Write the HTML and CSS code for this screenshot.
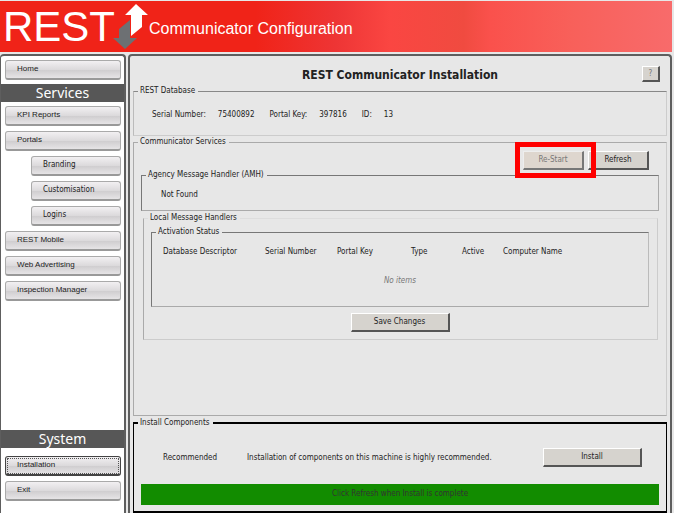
FILE: index.html
```html
<!DOCTYPE html>
<html lang="en">
<head>
    <meta charset="UTF-8">
    <meta name="viewport" content="width=device-width, initial-scale=1.0">
    <title>REST Communicator Configuration</title>
    <link rel="stylesheet" href="styles.css">
</head>
<body>
    <header class="banner">
        <span class="brand">REST</span>
        <svg class="arrows" viewBox="0 0 36 48" aria-hidden="true">
            <path d="M17 17V35H24L12 46L0 35H6V26Z" fill="#6d7073"/>
            <path d="M23 1L35 12H29V24L18 33V12H12Z" fill="#fff"/>
        </svg>
        <span class="product">Communicator Configuration</span>
    </header>

    <div class="layout">
        <nav class="sidebar">
            <button class="nav-button home">Home</button>
            <h2>Services</h2>
            <div class="nav-group">
                <button class="nav-button">KPI Reports</button>
                <button class="nav-button">Portals</button>
                <button class="nav-button sub">Branding</button>
                <button class="nav-button sub">Customisation</button>
                <button class="nav-button sub">Logins</button>
                <button class="nav-button">REST Mobile</button>
                <button class="nav-button">Web Advertising</button>
                <button class="nav-button">Inspection Manager</button>
            </div>
            <h2 class="system">System</h2>
            <div class="nav-group system-group">
                <button class="nav-button active">Installation</button>
                <button class="nav-button">Exit</button>
            </div>
        </nav>

        <main class="content">
            <div class="title-row">
                <h1>REST Communicator Installation</h1>
                <button class="button help">?</button>
            </div>

            <fieldset class="database">
                <legend>REST Database</legend>
                <dl>
                    <dt>Serial Number:</dt>
                    <dd>75400892</dd>
                    <dt>Portal Key:</dt>
                    <dd>397816</dd>
                    <dt>ID:</dt>
                    <dd>13</dd>
                </dl>
            </fieldset>

            <fieldset class="services">
                <legend>Communicator Services</legend>
                <div class="section-body">
                    <div class="service-actions">
                        <div class="highlight">
                            <button class="button restart" disabled>Re-Start</button>
                        </div>
                        <button class="button">Refresh</button>
                    </div>

                    <fieldset class="agency">
                        <legend>Agency Message Handler (AMH)</legend>
                        <p>Not Found</p>
                    </fieldset>

                    <fieldset class="local">
                        <legend>Local Message Handlers</legend>
                        <div class="local-body">
                            <fieldset class="activation">
                                <legend>Activation Status</legend>
                                <table>
                                    <thead>
                                        <tr>
                                            <th class="col-database">Database Descriptor</th>
                                            <th class="col-serial">Serial Number</th>
                                            <th class="col-portal">Portal Key</th>
                                            <th class="col-type">Type</th>
                                            <th class="col-active">Active</th>
                                            <th>Computer Name</th>
                                        </tr>
                                    </thead>
                                    <tbody>
                                        <tr>
                                            <td colspan="6">No items</td>
                                        </tr>
                                    </tbody>
                                </table>
                            </fieldset>
                            <button class="button wide save">Save Changes</button>
                        </div>
                    </fieldset>
                </div>
            </fieldset>

            <fieldset class="install">
                <legend>Install Components</legend>
                <div class="install-body">
                    <div class="install-row">
                        <span class="level">Recommended</span>
                        <span>Installation of components on this machine is highly recommended.</span>
                        <button class="button wide">Install</button>
                    </div>
                    <p class="notice">Click Refresh when Install is complete</p>
                </div>
            </fieldset>
        </main>
    </div>
</body>
</html>
```

FILE: styles.css
```css
* {
    box-sizing: border-box;
}
body {
    display: flex;
    flex-direction: column;
    min-height: 100vh;
    margin: 0;
    border-top: 1px solid #e7e7e7;
    border-bottom: 6px solid #fff;
    background: #e7e7e7;
    color: #222;
    font-family: "DejaVu Sans Condensed", "DejaVu Sans", sans-serif;
    font-size: 8px;
    line-height: 10px;
}
h1, h2, p, dl, dd {
    margin: 0;
}
button {
    font: inherit;
    color: inherit;
}

/* Banner */
.banner {
    display: flex;
    height: 51px;
    margin-right: 2px;
    padding-left: 3px;
    background: linear-gradient(90deg, #f02318 0%, #f02318 38%, #ee3535 50%, #fa4642 58%, #f04b40 69%, #fa514c 73%, #f8605a 85%, #f86b6b 100%);
    color: #fff;
    font-family: "Liberation Sans", Arial, sans-serif;
}
.brand {
    width: 110px;
    font-size: 42px;
    line-height: 51px;
}
.arrows {
    width: 36px;
    height: 48px;
    margin-top: 2px;
}
.product {
    padding-top: 18px;
    font-size: 16px;
    line-height: 20px;
}

/* Page layout */
.layout {
    display: flex;
    flex: 1;
    gap: 2px;
    padding: 2px 2px 0 0;
}
.sidebar {
    display: flex;
    flex-direction: column;
    width: 126px;
    border: 2px solid #5e5e5e;
    border-width: 2px 2px 0 1px;
    border-radius: 4px 4px 0 0;
    background: #fff;
}
.sidebar h2 {
    height: 18px;
    background: #575757;
    color: #fff;
    font-family: "Noto Sans", sans-serif;
    font-size: 14px;
    font-weight: normal;
    line-height: 18px;
    text-align: center;
}
.sidebar .system {
    margin-top: auto;
}
.nav-group {
    display: flex;
    flex-direction: column;
    gap: 5px;
    padding: 4px 0;
}
.system-group {
    padding: 8px 0 12px;
}
.nav-button {
    height: 20px;
    margin: 0 3px 0 4px;
    padding: 0 0 2px 11px;
    border: 1px solid #aaa;
    border-bottom: 2px solid #999;
    border-radius: 3px;
    background: linear-gradient(#f2f0f2, #dcdadc 50%, #d0ced0 55%, #e6e4e6);
    font-family: "Liberation Sans", Arial, sans-serif;
    text-align: left;
}
.nav-button.home {
    margin-top: 4px;
    margin-bottom: 4px;
}
.nav-button.sub {
    margin-left: 30px;
    font-family: "DejaVu Sans Condensed", "DejaVu Sans", sans-serif;
}
.nav-button.active {
    border-color: #444;
    outline: 1px dotted #555;
    outline-offset: -3px;
}

/* Main panel */
.content {
    display: flex;
    flex: 1;
    flex-direction: column;
    padding: 0 3px;
    border: 2px solid #5e5e5e;
    border-bottom: 0;
    border-radius: 4px 4px 0 0;
}
.title-row {
    position: relative;
    height: 30px;
    padding-top: 11px;
}
.title-row h1 {
    font-size: 12px;
    line-height: 16px;
    text-align: center;
}
.button {
    width: 61px;
    height: 19px;
    padding: 0;
    border: 1px solid;
    border-width: 1px 2px 2px 1px;
    border-color: #fff #555 #555 #fff;
    background: #d6d3ce;
}
.button.wide {
    width: 99px;
}
.button.help {
    position: absolute;
    top: 10px;
    right: 7px;
    width: 18px;
    height: 16px;
    color: #777;
}

/* Grouped sections */
fieldset {
    min-width: 0;
    margin: 0;
    padding: 0;
    border: 1px solid #aaa;
}
legend {
    height: 10px;
    margin-left: 4px;
    padding: 0 3px 0 2px;
}
.database {
    height: 50px;
    border-color: #888 #ccc #ccc #bbb;
}
.database dl {
    display: flex;
    padding: 14px 0 0 18px;
}
.database dt {
    margin-right: 12px;
}
.database dd {
    margin-right: 15px;
}
.services {
    flex: 1;
    margin: 1px 0 2px;
    border-color: #aaa #ccc #aaa #aaa;
}
.section-body {
    padding: 4px 7px 0;
}
.service-actions {
    display: flex;
    justify-content: flex-end;
    gap: 4px;
    margin-right: 10px;
}
.highlight {
    position: relative;
}
.highlight::after {
    content: "";
    position: absolute;
    inset: -9px -12px -8px -8px;
    z-index: 1;
    border: 5px solid #f00;
}
.button.restart {
    display: block;
    border-color: #eee #777 #777 #eee;
    background: #ded6ce;
    color: #777;
}
.agency {
    border-color: #777 #aaa #aaa #777;
}
.agency p {
    padding: 10px 0 10px 19px;
}
.local {
    margin: 2px 1px 0 2px;
    border-color: #ddd #ccc #ccc #aaa;
}
.local-body {
    padding: 4px 8px 7px 7px;
}
.activation {
    height: 80px;
    border-color: #777 #bbb #aaa #777;
}
table {
    width: 100%;
    border-collapse: collapse;
    table-layout: fixed;
}
th {
    height: 30px;
    padding: 0;
    font-weight: normal;
    text-align: left;
}
th:first-child {
    padding-left: 11px;
}
td {
    height: 28px;
    padding: 0;
    color: #777;
    font-style: italic;
    text-align: center;
}
.col-database {
    width: 113px;
}
.col-serial {
    width: 72px;
}
.col-portal {
    width: 74px;
}
.col-type {
    width: 51px;
}
.col-active {
    width: 41px;
}
.save {
    display: block;
    margin: 6px auto 0;
}

/* Install section */
.install {
    border: 2px solid #000;
    border-width: 2px 1px;
}
.install-body {
    padding: 20px 7px 6px;
}
.install-row {
    display: flex;
    align-items: center;
    padding: 0 17px 0 22px;
}
.level {
    width: 84px;
}
.install-row .button {
    margin-left: auto;
}
.notice {
    margin-top: 17px;
    padding: 5px 0 6px;
    background: #128c00;
    color: #333;
    text-align: center;
}
```
